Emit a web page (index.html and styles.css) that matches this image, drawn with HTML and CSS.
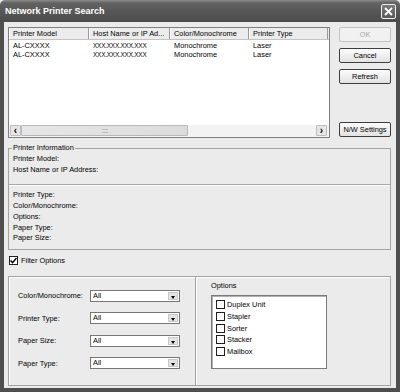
FILE: index.html
```html
<html>
<head>
    <title>Network Printer Search</title>
    <link rel="stylesheet" href="styles.css">
</head>
<body>
    <div class="window">
        <div class="titlebar">
            <span class="title">Network Printer Search</span>
            <div class="close">
                <svg width="13" height="13" viewBox="0 0 13 13">
                    <path d="M3 3 L10 10 M10 3 L3 10" stroke="#fff" stroke-width="1.8" fill="none" />
                </svg>
            </div>
        </div>

        <div class="content">
            <div class="top">
                <div class="listview">
                    <div class="lv-head">
                        <div class="hcell">Printer Model</div>
                        <div class="hcell">Host Name or IP Ad...</div>
                        <div class="hcell">Color/Monochrome</div>
                        <div class="hcell">Printer Type</div>
                    </div>
                    <div class="lv-body">
                        <div class="lv-row">
                            <span>AL-CXXXX</span>
                            <span class="ip">XXX.XXX.XXX.XXX</span>
                            <span>Monochrome</span>
                            <span>Laser</span>
                        </div>
                        <div class="lv-row">
                            <span>AL-CXXXX</span>
                            <span class="ip">XXX.XXX.XXX.XXX</span>
                            <span>Monochrome</span>
                            <span>Laser</span>
                        </div>
                    </div>
                    <div class="hscroll">
                        <div class="arrow">&lsaquo;</div>
                        <div class="thumb"><span class="grip"></span></div>
                        <div class="track"></div>
                        <div class="arrow">&rsaquo;</div>
                    </div>
                </div>

                <div class="buttons">
                    <div class="btn disabled">OK</div>
                    <div class="btn">Cancel</div>
                    <div class="btn">Refresh</div>
                    <div class="btn nw">N/W Settings</div>
                </div>
            </div>

            <!-- printer info -->
            <fieldset class="info">
                <legend>Printer Information</legend>
                <div class="info-top">
                    <div class="line">Printer Model:</div>
                    <div class="line">Host Name or IP Address:</div>
                </div>
                <div class="info-bottom">
                    <div class="line">Printer Type:</div>
                    <div class="line">Color/Monochrome:</div>
                    <div class="line">Options:</div>
                    <div class="line">Paper Type:</div>
                    <div class="line">Paper Size:</div>
                </div>
            </fieldset>

            <div class="filter-check">
                <span class="check checked">
                    <svg width="7" height="7" viewBox="0 0 7 7">
                        <path d="M0.5 3.5 L2.6 5.6 L6.5 1" stroke="#000" stroke-width="1.4" fill="none" />
                    </svg>
                </span>
                Filter Options
            </div>

            <!-- filter -->
            <div class="filter">
                <div class="filter-left">
                    <div class="frow">
                        <span>Color/Monochrome:</span>
                        <div class="combo"><span class="val">All</span><span class="drop"></span></div>
                    </div>
                    <div class="frow">
                        <span>Printer Type:</span>
                        <div class="combo"><span class="val">All</span><span class="drop"></span></div>
                    </div>
                    <div class="frow">
                        <span>Paper Size:</span>
                        <div class="combo"><span class="val">All</span><span class="drop"></span></div>
                    </div>
                    <div class="frow">
                        <span>Paper Type:</span>
                        <div class="combo"><span class="val">All</span><span class="drop"></span></div>
                    </div>
                </div>
                <div class="filter-right">
                    <div class="opt-label">Options</div>
                    <div class="optlist">
                        <div class="opt"><span class="box"></span>Duplex Unit</div>
                        <div class="opt"><span class="box"></span>Stapler</div>
                        <div class="opt"><span class="box"></span>Sorter</div>
                        <div class="opt"><span class="box"></span>Stacker</div>
                        <div class="opt"><span class="box"></span>Mailbox</div>
                    </div>
                </div>
            </div>
        </div>
    </div>
</body>
</html>
```

FILE: styles.css
```css
* {
    box-sizing: border-box;
}

body {
    margin: 0;
    font-family: "Liberation Sans", Arial, sans-serif;
    font-size: 7.4px;
    color: #000;
    background: #ebebeb;
}

.window {
    width: 400px;
    height: 392px;
    display: flex;
    flex-direction: column;
}

/* title bar */
.titlebar {
    height: 22px;
    display: flex;
    align-items: center;
    padding: 0 4px 0 5px;
    background: linear-gradient(#8c8c8c 0, #626262 3px, #575757 50%, #4c4c4c 100%);
    border-radius: 5px 5px 0 0;
}

.title {
    color: #fff;
    font-weight: bold;
    font-size: 9px;
    flex: 1;
}

.close {
    width: 15px;
    height: 15px;
    border: 1px solid #f0f0f0;
    border-radius: 2px;
    background: linear-gradient(#7a7a7a, #5a5a5a);
    display: flex;
    align-items: center;
    justify-content: center;
}

.content {
    flex: 1;
    display: flex;
    flex-direction: column;
    border: 4px solid #4e4e4e;
    border-top: 0;
    padding: 5px 5px 0 4px;
}

/* list + buttons */
.top {
    display: flex;
    height: 111px;
}

.listview {
    width: 322px;
    border: 1px solid #7f7f7f;
    background: #fff;
    display: flex;
    flex-direction: column;
}

.lv-head {
    display: grid;
    grid-template-columns: 80px 81px 79px 79px;
    height: 12px;
    background: #ececec;
    border-bottom: 1px solid #c4c4c4;
}

.hcell {
    padding-left: 4px;
    line-height: 11px;
    border-right: 1px solid #9a9a9a;
    box-shadow: inset 1px 0 #fff;
    white-space: nowrap;
    overflow: hidden;
}

.lv-body {
    flex: 1;
    padding-top: 1px;
}

.lv-row {
    display: grid;
    grid-template-columns: 80px 81px 79px 79px;
    line-height: 9.4px;
}

.lv-row span {
    padding-left: 4px;
}

.ip {
    font-size: 6.4px;
    letter-spacing: -0.2px;
}

.hscroll {
    height: 12px;
    display: flex;
    background: #f3f3f3;
    padding: 0 2px 1px 1px;
}

.arrow {
    width: 11px;
    border: 1px solid #bdbdbd;
    background: #e6e6e6;
    border-radius: 1px;
    font-size: 10px;
    font-weight: bold;
    line-height: 9px;
    text-align: center;
}

.thumb {
    width: 167px;
    border: 1px solid #b8b8b8;
    border-radius: 1px;
    background: linear-gradient(90deg, #e6e6e6, #dcdcdc);
    display: flex;
    align-items: center;
    justify-content: center;
}

.grip {
    width: 6px;
    height: 4px;
    border-top: 1px solid #bbb;
    border-bottom: 1px solid #bbb;
}

.track {
    flex: 1;
}

.buttons {
    width: 52px;
    margin-left: auto;
    display: flex;
    flex-direction: column;
    gap: 6px;
}

.btn {
    height: 15px;
    border: 1px solid #3d3d3d;
    border-radius: 2px;
    background: linear-gradient(#fcfcfc, #e2e2e2);
    text-align: center;
    line-height: 13px;
}

.btn.disabled {
    color: #a6a6a6;
    border-color: #c2c2c2;
    background: #f1f1f1;
}

.btn.nw {
    margin-top: auto;
    margin-bottom: 1px;
}

/* printer information */
.info {
    margin: 5px 0 0;
    padding: 0;
    min-width: 0;
    border: 1px solid #a4a4a4;
}

.info legend {
    margin-left: 3px;
    padding: 0 1px;
    line-height: 10px;
}

.line {
    line-height: 10.7px;
}

.info-top {
    padding: 1px 4px 9px;
    border-bottom: 1px solid #a8a8a8;
    box-shadow: 0 1px #fff;
}

.info-bottom {
    padding: 5px 4px 5px;
}

/* filter */
.filter-check {
    margin-top: 6px;
    height: 10px;
    display: flex;
    align-items: center;
    gap: 3px;
    padding-left: 1px;
}

.check {
    width: 9px;
    height: 9px;
    border: 1px solid #222;
    background: #fff;
    display: flex;
    align-items: center;
    justify-content: center;
}

.filter {
    flex: 1;
    margin: 10px 0 2px;
    border: 1px solid #a4a4a4;
    box-shadow: inset 1px 1px #fff;
    display: grid;
    grid-template-columns: 187px 1fr;
}

.filter-left {
    border-right: 1px solid #a4a4a4;
    box-shadow: 1px 0 #fff;
    padding: 13px 0 0 9px;
    display: flex;
    flex-direction: column;
    gap: 10.5px;
}

.frow {
    display: grid;
    grid-template-columns: 72px 90px;
    align-items: center;
    height: 12px;
}

.combo {
    height: 12px;
    border: 1px solid #767676;
    background: #fff;
    display: flex;
}

.val {
    flex: 1;
    padding-left: 2px;
    line-height: 10px;
}

.drop {
    width: 10px;
    margin: 1px;
    background: #e4e4e4;
    border: 1px solid #c8c8c8;
    position: relative;
}

.drop::after {
    content: "";
    position: absolute;
    left: 2px;
    top: 3px;
    border-left: 2.5px solid transparent;
    border-right: 2.5px solid transparent;
    border-top: 3px solid #000;
}

.filter-right {
    padding: 4px 0 0 15px;
}

.opt-label {
    line-height: 10px;
}

.optlist {
    margin-top: 4px;
    width: 116px;
    height: 74px;
    border: 1px solid #7a7a7a;
    box-shadow: inset 1px 1px #b0b0b0;
    background: #fff;
    padding: 3px 0 0 4px;
}

.opt {
    height: 11.7px;
    display: flex;
    align-items: center;
    gap: 2px;
}

.box {
    width: 9px;
    height: 9px;
    border: 1.5px solid #1e1e1e;
    background: #fff;
}
```
